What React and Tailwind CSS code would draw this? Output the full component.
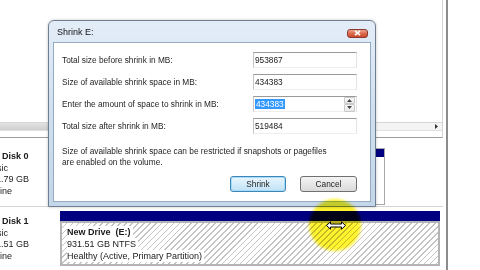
import React from "react";

const F = "font-['Liberation_Sans',Arial,sans-serif]";

function ReadBox({ value, spinner, selected }) {
  return (
    <div className="relative h-[16px] w-[104px] bg-white border-t border-t-[#9a9a9a] border-l border-l-[#c4c4c4] border-r border-r-[#e4e4e4] border-b border-b-[#eeeeee] flex items-center">
      {selected ? (
        <span className="ml-[1px] bg-[#3399ff] text-white px-[1px] leading-[10px]">{value}</span>
      ) : (
        <span className="ml-[1px] text-[#1a1a1a]">{value}</span>
      )}
      {spinner && (
        <div className="ml-auto mr-[1px] flex flex-col h-[15px] w-[11px]">
          <div className="flex-1 flex items-center justify-center border border-[#c9c9c9] bg-gradient-to-b from-[#fbfbfb] to-[#e8e8e8] rounded-[1px]">
            <svg width="5" height="3" viewBox="0 0 5 3"><path d="M0 3 L2.5 0 L5 3 Z" fill="#444" /></svg>
          </div>
          <div className="flex-1 flex items-center justify-center border border-[#c9c9c9] bg-gradient-to-b from-[#fbfbfb] to-[#e8e8e8] rounded-[1px]">
            <svg width="5" height="3" viewBox="0 0 5 3"><path d="M0 0 L2.5 3 L5 0 Z" fill="#444" /></svg>
          </div>
        </div>
      )}
    </div>
  );
}

function DiskLabel({ name, lines, pt }) {
  return (
    <div className={`w-[60px] shrink-0 flex flex-col ml-[-14px] text-[9px] leading-[11.5px] text-[#1a1a1a] ${pt}`}>
      <div className="flex items-center">
        <span className="w-[16px] shrink-0" />
        <span className="font-bold">{name}</span>
      </div>
      {lines.map((l) => (
        <div key={l}>{l}</div>
      ))}
    </div>
  );
}

export default function App() {
  return (
    <div className={`relative w-[480px] h-[270px] overflow-hidden bg-white ${F}`}>
      {/* Background: Disk Management */}
      <div className="flex h-full">
        <div className="w-[443px] shrink-0 flex flex-col">
          {/* volume list pane */}
          <div className="h-[138px] shrink-0 flex flex-col border-b border-b-[#9c9c9c] border-r border-r-[#d4d4d4]">
            <div className="flex-1" />
            <div className="h-[9px] flex border-t border-t-[#d6d6d6] border-b border-b-[#e0e0e0]">
              <div className="w-[120px] bg-gradient-to-b from-[#e2e2e2] to-[#cfcfcf] border-r border-r-[#b0b0b0]" />
              <div className="flex-1 bg-[#f4f4f4]" />
              <div className="w-[11px] flex items-center justify-center bg-[#f4f4f4]">
                <svg width="3" height="5" viewBox="0 0 3 5"><path d="M0 0 L3 2.5 L0 5 Z" fill="#333" /></svg>
              </div>
            </div>
            <div className="h-[6px]" />
          </div>
          {/* disk rows */}
          <div className="flex-1 flex flex-col">
            <div className="h-[69px] shrink-0 flex border-b border-b-[#d4d4d4]">
              <DiskLabel name="Disk 0" lines={["Basic", "931.79 GB", "Online"]} pt="pt-[13px]" />
              <div className="flex-1 pt-[10px] pb-[1px] pr-[3px] ml-[14px]">
                <div className="w-[325px] h-full flex flex-col border border-[#a8a8a8]">
                  <div className="h-[8px] bg-[#000080]" />
                  <div className="flex-1 bg-white" />
                </div>
              </div>
            </div>
            <div className="flex-1 flex">
              <DiskLabel name="Disk 1" lines={["Basic", "931.51 GB", "Online"]} pt="pt-[9px]" />
              <div className="flex-1 pt-[4px] pb-[4px] pr-[3px] ml-[14px] flex flex-col">
                <div className="h-[10px] bg-[#000080]" />
                <div className="flex-1 border-2 border-[#b4b4b4] bg-[repeating-linear-gradient(135deg,#ffffff_0px,#ffffff_3px,#c4c4c4_3px,#c4c4c4_4.2px)] pl-[5px] pt-[3px] flex flex-col items-start text-[9px] leading-[12px] text-[#1a1a1a]">
                  <span className="bg-white font-bold pr-[2px]">New Drive&nbsp; (E:)</span>
                  <span className="bg-white pr-[2px]">931.51 GB NTFS</span>
                  <span className="bg-white pr-[2px]">Healthy (Active, Primary Partition)</span>
                </div>
              </div>
            </div>
          </div>
        </div>
        <div className="w-[3px] shrink-0" />
        <div className="w-[2px] shrink-0 bg-[#8c8c8c]" />
        <div className="flex-1" />
      </div>

      {/* Dialog */}
      <div className="absolute left-[48px] top-[20px] w-[328px] h-[187px] flex flex-col rounded-t-[6px] border border-[#6f7f90] bg-gradient-to-b from-[#e3edf8] via-[#cfdff0] to-[#c3d6ea] shadow-[0_0_3px_rgba(0,0,0,0.25)]">
        <div className="h-[21px] shrink-0 flex items-center pt-[3px] pl-[8px] pr-[7px]">
          <span className="text-[9px] text-[#111]">Shrink E:</span>
          <div className="ml-auto w-[21px] h-[9px] rounded-[3px] border border-[#8a3a2e] bg-gradient-to-b from-[#eba58f] via-[#dc6a4c] to-[#cc4a2c] flex items-center justify-center">
            <svg width="7" height="6" viewBox="0 0 7 6"><path d="M1 0.8 L6 5.2 M6 0.8 L1 5.2" stroke="#fff" strokeWidth="1.6" /></svg>
          </div>
        </div>
        <div className="flex-1 mx-[4px] mb-[4px] bg-white border border-[#95a9bf] flex flex-col pl-[8px] pt-[9px] text-[8.3px] text-[#1e1e1e]">
          <div className="grid grid-cols-[191px_104px] gap-y-[6px] items-center">
            <span className="pt-[1px]">Total size before shrink in MB:</span>
            <ReadBox value="953867" />
            <span className="pt-[1px]">Size of available shrink space in MB:</span>
            <ReadBox value="434383" />
            <span className="pt-[1px]">Enter the amount of space to shrink in MB:</span>
            <ReadBox value="434383" spinner selected />
            <span className="pt-[1px]">Total size after shrink in MB:</span>
            <ReadBox value="519484" />
          </div>
          <div className="mt-[12px] leading-[11px]">
            <div>Size of available shrink space can be restricted if snapshots or pagefiles</div>
            <div>are enabled on the volume.</div>
          </div>
          <div className="flex justify-end gap-[14px] mt-[8px] pr-[13px]">
            <div className="w-[56px] h-[16px] rounded-[3px] border border-[#3d86b9] bg-gradient-to-b from-[#eaf6fd] to-[#bfe2f7] shadow-[inset_0_0_0_1px_#a8dbf5] flex items-center justify-center">
              Shrink
            </div>
            <div className="w-[57px] h-[16px] rounded-[3px] border border-[#707070] bg-gradient-to-b from-[#f4f4f4] to-[#dadada] flex items-center justify-center">
              Cancel
            </div>
          </div>
        </div>
      </div>

      {/* cursor highlight */}
      <div className="absolute left-[309px] top-[199px] w-[52px] h-[52px] rounded-full bg-[#fff22e] mix-blend-multiply blur-[1.5px]" />
      <svg className="absolute left-[326px] top-[221px]" width="20" height="9" viewBox="0 0 20 9">
        <path d="M0.5 4.5 L4.5 0.8 L4.5 3 L15.5 3 L15.5 0.8 L19.5 4.5 L15.5 8.2 L15.5 6 L4.5 6 L4.5 8.2 Z" fill="#fff" stroke="#000" strokeWidth="1" />
      </svg>
    </div>
  );
}
